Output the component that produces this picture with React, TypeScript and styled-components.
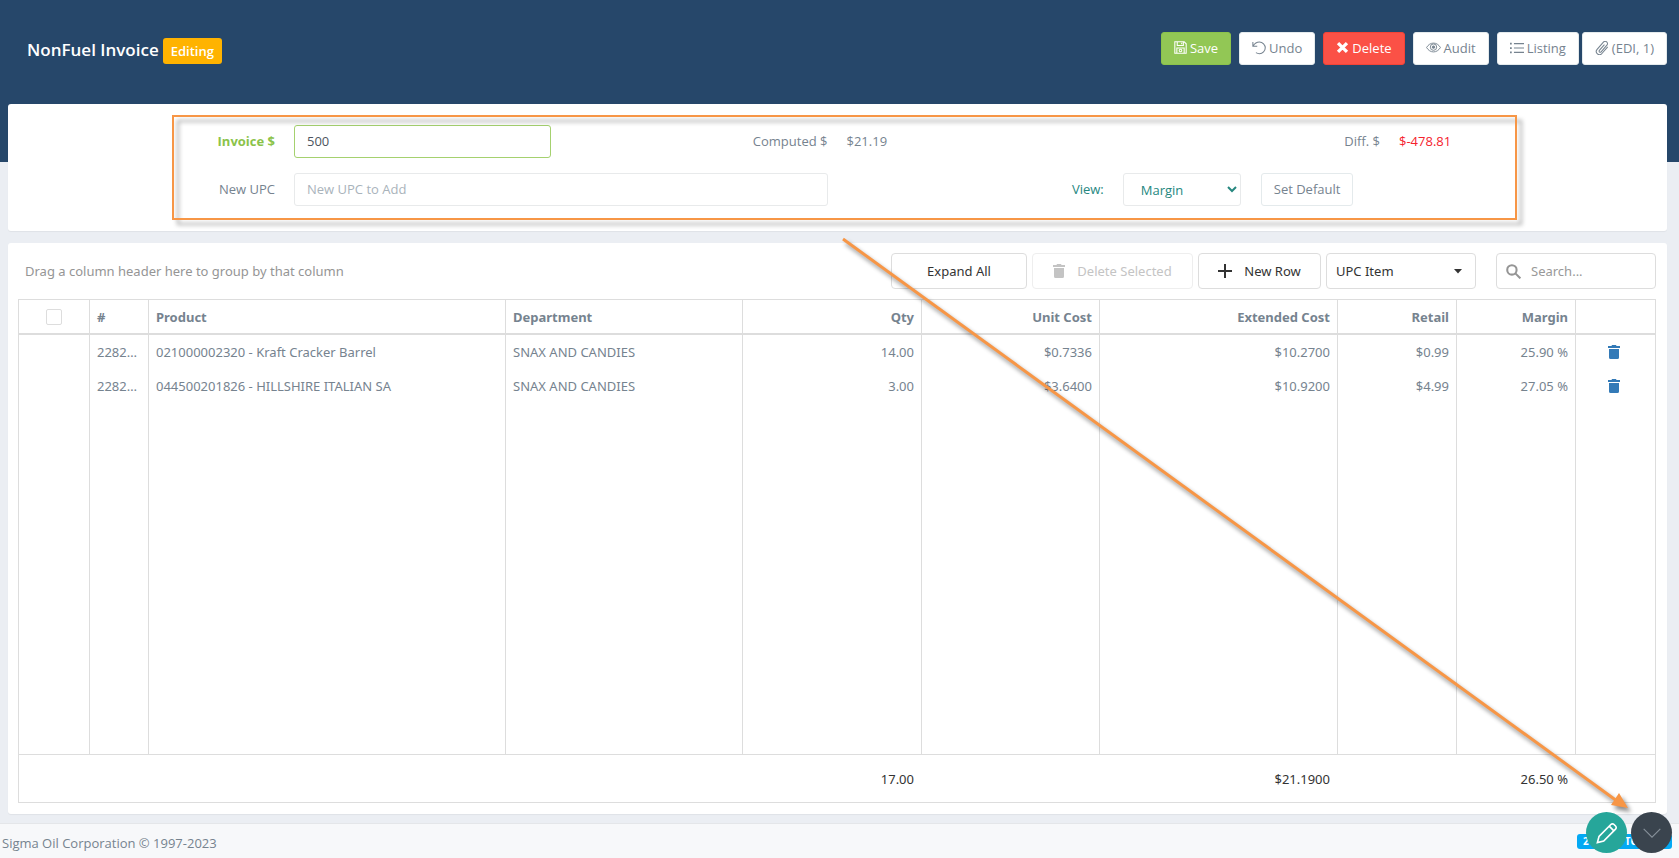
import React from "react";
import styled, { createGlobalStyle, css } from "styled-components";

const Global = createGlobalStyle`
  * { box-sizing: border-box; }
  body {
    margin: 0;
    background: #ebeef3;
    color: #76838f;
    font: 13px/20px "Open Sans", sans-serif;
  }
  button, input, select { font: inherit; color: inherit; margin: 0; }
`;

const Page = styled.div`
  position: relative;
  min-height: 100vh;
  min-width: 1280px;
  display: flex;
  flex-direction: column;
  background: linear-gradient(#26476a 162px, transparent 162px);
`;

const Header = styled.header`
  display: flex;
  justify-content: space-between;
  padding: 32px 12px 35px 27px;
`;

const TitleGroup = styled.div`
  display: flex;
  align-items: center;
  gap: 4px;
  height: 37px;
`;

const Title = styled.h1`
  margin: 0;
  padding-bottom: 2px;
  color: #fff;
  font-size: 17px;
  line-height: 24px;
  font-weight: 600;
`;

const StatusBadge = styled.span`
  padding: 3px 8px;
  border-radius: 3px;
  background: #ffb300;
  color: #fff;
  font-weight: 600;
`;

const Actions = styled.div`
  display: flex;
  gap: 8px;
`;

const ActionPair = styled.div`
  display: flex;
  gap: 3px;
`;

const tones = {
  plain: css`background: #fff; border-color: #e4eaec; color: #76838f;`,
  green: css`background: #92c755; border-color: #8bc34a; color: #fff;`,
  red: css`background: #fb5146; border-color: #f44336; color: #fff;`,
};

const Button = styled.button<{ $tone?: keyof typeof tones }>`
  display: inline-flex;
  align-items: center;
  justify-content: center;
  gap: 3px;
  height: 33px;
  padding: 0 12px 2px;
  border: 1px solid;
  border-radius: 3px;
  white-space: nowrap;
  ${(p) => tones[p.$tone ?? "plain"]}
`;

const Main = styled.main`
  display: flex;
  flex-direction: column;
  gap: 12px;
  padding: 0 12px 9px 8px;
`;

const Card = styled.section`
  background: #fff;
  border-radius: 3px;
  box-shadow: 0 1px 1px rgba(0, 0, 0, 0.05);
`;

const FormCard = styled(Card)`
  padding: 11px 150px 11px 164px;
`;

const Form = styled.form`
  position: relative;
  display: grid;
  grid-template-columns: 103px repeat(4, 1fr) 118px;
  column-gap: 19px;
  row-gap: 15px;
  padding: 10px 0 14px;
  align-items: center;
`;

const Highlight = styled.div`
  position: absolute;
  inset: 0;
  border: 2px solid #f79646;
  filter: drop-shadow(5px 5px 2px rgba(0, 0, 0, 0.35));
  pointer-events: none;
`;

const Label = styled.label<{ $accent?: "green" | "teal" }>`
  padding-bottom: 2px;
  text-align: right;
  color: ${(p) => (p.$accent === "green" ? "#8bc34a" : p.$accent === "teal" ? "#26877f" : "#76838f")};
  font-weight: ${(p) => (p.$accent === "green" ? 700 : 400)};
`;

const Value = styled.output<{ $negative?: boolean }>`
  padding-bottom: 2px;
  color: ${(p) => (p.$negative ? "#f5222d" : "#76838f")};
`;

const Field = styled.input<{ $wide?: boolean; $valid?: boolean }>`
  width: 100%;
  height: 33px;
  padding: 0 12px 2px;
  border: 1px solid ${(p) => (p.$valid ? "#a5d16f" : "#e8eaeb")};
  border-radius: 3px;
  background: #fff;
  color: #4d5560;
  outline: 0;
  grid-column: span ${(p) => (p.$wide ? 2 : 1)};
  &::placeholder { color: #a9b3bb; opacity: 1; }
`;

const ViewControls = styled.div`
  grid-column: span 2;
  display: flex;
  gap: 20px;
`;

const ViewSelect = styled.select`
  width: 118px;
  height: 33px;
  padding: 0 0 0 13px;
  border: 1px solid #e8eaeb;
  border-radius: 3px;
  background: #fff;
  color: #26877f;
`;

const GridCard = styled(Card)`
  padding: 10px 11px 11px 10px;
  font-family: "Noto Sans", sans-serif;
`;

const Toolbar = styled.div`
  display: flex;
  align-items: center;
  gap: 5px;
  margin-bottom: 10px;
`;

const GroupHint = styled.p`
  flex: 1;
  margin: 0;
  padding-left: 7px;
  color: #959595;
`;

const ToolButton = styled.button<{ $width: number }>`
  display: flex;
  align-items: center;
  justify-content: center;
  gap: 12px;
  width: ${(p) => p.$width}px;
  height: 36px;
  padding: 0;
  border: 1px solid #ddd;
  border-radius: 4px;
  background: #fff;
  color: #333;
  &:disabled { color: #c4c4c4; border-color: #eee; }
`;

const DropDown = styled.div`
  position: relative;
  width: 150px;
  svg { position: absolute; right: 14px; top: 16px; pointer-events: none; }
`;

const TypeSelect = styled.select`
  appearance: none;
  width: 100%;
  height: 36px;
  padding: 0 9px;
  border: 1px solid #ddd;
  border-radius: 4px;
  background: #fff;
  color: #333;
`;

const SearchBox = styled.label`
  display: flex;
  align-items: center;
  gap: 10px;
  width: 160px;
  height: 36px;
  margin-left: 15px;
  padding: 0 9px;
  border: 1px solid #ddd;
  border-radius: 4px;
  color: #959595;
  input {
    flex: 1;
    min-width: 0;
    padding: 0;
    border: 0;
    outline: 0;
    background: none;
  }
  input::placeholder { color: #999; opacity: 1; }
`;

const Table = styled.table`
  width: 100%;
  table-layout: fixed;
  border: 1px solid #ddd;
  border-collapse: separate;
  border-spacing: 0;
`;

const Cell = styled.td<{ $align?: "right" | "center" }>`
  height: 34px;
  padding: 0 7px;
  border-right: 1px solid #ddd;
  text-align: ${(p) => p.$align ?? "left"};
  overflow: hidden;
  text-overflow: ellipsis;
  white-space: nowrap;
  &:last-child { border-right: 0; }
`;

const HeadCell = styled(Cell)`
  height: 35px;
  border-bottom: 2px solid #ddd;
  font-weight: 700;
`;

const ActionCell = styled(Cell)`
  padding-right: 11px;
`;

const FillerCell = styled(Cell)`
  height: 351px;
`;

const TotalCell = styled(Cell)`
  height: 48px;
  padding-right: 8px;
  border-right: 0;
  border-top: 1px solid #ddd;
  color: #333;
`;

const CheckBox = styled.input`
  appearance: none;
  display: block;
  width: 16px;
  height: 16px;
  margin: 0 auto;
  border: 1px solid #ddd;
  border-radius: 2px;
  background: #fff;
`;

const IconButton = styled.button`
  display: flex;
  margin: 0 auto;
  padding: 0;
  border: 0;
  background: none;
  color: #337ab7;
`;

const Footer = styled.footer`
  flex: 1;
  display: flex;
  justify-content: space-between;
  align-items: flex-start;
  padding: 9px 7px 5px 2px;
  border-top: 1px solid #e4e6e9;
  background: #f7f8fa;
`;

const FooterBadge = styled.span`
  display: flex;
  gap: 36px;
  width: 95px;
  margin-top: 1px;
  padding: 0 6px;
  border-radius: 3px;
  background: #03a9f4;
  color: #fff;
  font-size: 10px;
  line-height: 15px;
  font-weight: 700;
`;

const FloatingButtons = styled.div`
  position: absolute;
  right: 7px;
  bottom: 5px;
  display: flex;
  gap: 4px;
`;

const RoundButton = styled.button<{ $dark?: boolean }>`
  display: flex;
  align-items: center;
  justify-content: center;
  width: 41px;
  height: 41px;
  padding: 0;
  border: 0;
  border-radius: 50%;
  background: ${(p) => (p.$dark ? "#3a444e" : "#26a69a")};
  color: ${(p) => (p.$dark ? "#86909a" : "#fff")};
`;

const Arrow = styled.svg`
  position: absolute;
  inset: 0;
  width: 100%;
  height: 100%;
  pointer-events: none;
  filter: drop-shadow(3px 4px 2px rgba(0, 0, 0, 0.45));
`;

const Line = ({ size = 13, sw = 1, children }: { size?: number; sw?: number; children: React.ReactNode }) => (
  <svg width={size} height={size} viewBox="0 0 16 16" fill="none" stroke="currentColor" strokeWidth={sw} aria-hidden="true">
    {children}
  </svg>
);

const SaveIcon = () => (
  <Line sw={1.3}>
    <path d="M1 1h11.500L15 3.500V15H1z M4 1v4.500h7.500V1 M9.500 2v2 M3.500 15V8.500h9V15" />
    <circle cx="8" cy="11.700" r="1.600" />
  </Line>
);
const UndoIcon = () => (
  <Line size={14} sw={1.2}>
    <path d="M1 1v5h5 M1.300 5.800C3 2.800 5.500 1.200 8.500 1.200a6.600 6.600 0 1 1 0 13.300c-1.500 0-2.800-.4-4-1.200" />
  </Line>
);
const CrossIcon = () => (
  <Line sw={4}>
    <path d="M2.500 2.500l11 11M13.500 2.500l-11 11" />
  </Line>
);
const EyeIcon = () => (
  <Line size={15} sw={1}>
    <path d="M.6 8C2.500 4.900 5 3.300 8 3.300S13.500 4.900 15.400 8C13.500 11.100 11 12.700 8 12.700S2.500 11.100.6 8z" />
    <circle cx="8" cy="7.600" r="3.400" />
    <circle cx="8" cy="7.600" r="1.300" fill="currentColor" />
  </Line>
);
const ListIcon = () => (
  <Line size={14} sw={1.2}>
    <path d="M4.500 3H16M4.500 8H16M4.500 13H16" />
    <path d="M0 3h2M0 8h2M0 13h2" strokeWidth="2" />
  </Line>
);
const ClipIcon = () => (
  <Line size={14} sw={1.2}>
    <path d="M10.800 4.200L5 10.800a1.300 1.300 0 0 0 2 1.700l6.600-7.700a2.600 2.600 0 0 0-4-3.500L2.400 9.600a3.600 3.600 0 0 0 5.500 4.700l6.600-7.600" />
  </Line>
);
const TrashIcon = () => (
  <svg width="12" height="14" viewBox="0 0 12 14" fill="currentColor" aria-hidden="true">
    <path d="M0 1h3.500L4 0h4l.5 1H12v2H0zM1 4h10v8.500a1.500 1.500 0 0 1-1.500 1.500h-7A1.500 1.500 0 0 1 1 12.500z" />
  </svg>
);
const PlusIcon = () => (
  <svg width="14" height="14" viewBox="0 0 14 14" stroke="currentColor" strokeWidth="2" aria-hidden="true">
    <path d="M7 0v14M0 7h14" />
  </svg>
);
const SearchIcon = () => (
  <Line size={15} sw={2.2}>
    <circle cx="6.300" cy="6.300" r="5" />
    <path d="M10 10l5.300 5.300" />
  </Line>
);
const PencilIcon = () => (
  <Line size={22} sw={1.2}>
    <path d="M1 15l1.200-4.600L10.800 1.800a1.600 1.600 0 0 1 2.300 0l1.100 1.100a1.600 1.600 0 0 1 0 2.300L5.600 13.800zM9.600 3l3.400 3.400" />
  </Line>
);
const ChevronIcon = () => (
  <Line size={18} sw={1}>
    <path d="M.6 4.300L8 11.700l7.400-7.400" />
  </Line>
);

type Align = "right" | "center" | undefined;
const columns: { name: string; width?: number; align?: Align }[] = [
  { name: "#", width: 59 },
  { name: "Product" },
  { name: "Department", width: 237 },
  { name: "Qty", width: 179, align: "right" },
  { name: "Unit Cost", width: 178, align: "right" },
  { name: "Extended Cost", width: 238, align: "right" },
  { name: "Retail", width: 119, align: "right" },
  { name: "Margin", width: 119, align: "right" },
];

const rows = [
  ["2282001", "021000002320 - Kraft Cracker Barrel", "SNAX AND CANDIES", "14.00", "$0.7336", "$10.2700", "$0.99", "25.90 %"],
  ["2282002", "044500201826 - HILLSHIRE ITALIAN SA", "SNAX AND CANDIES", "3.00", "$3.6400", "$10.9200", "$4.99", "27.05 %"],
];

const totals = ["", "", "", "17.00", "", "$21.1900", "", "26.50 %"];

export default function App() {
  return (
    <Page>
      <Global />
      <Header>
        <TitleGroup>
          <Title>NonFuel Invoice</Title>
          <StatusBadge>Editing</StatusBadge>
        </TitleGroup>
        <Actions>
          <Button $tone="green"><SaveIcon />Save</Button>
          <Button><UndoIcon />Undo</Button>
          <Button $tone="red"><CrossIcon />Delete</Button>
          <Button><EyeIcon />Audit</Button>
          <ActionPair>
            <Button><ListIcon />Listing</Button>
            <Button><ClipIcon />(EDI, 1)</Button>
          </ActionPair>
        </Actions>
      </Header>

      <Main>
        <FormCard>
          <Form onSubmit={(e) => e.preventDefault()}>
            <Label htmlFor="invoice" $accent="green">Invoice $</Label>
            <Field id="invoice" defaultValue="500" $valid />
            <Label htmlFor="computed">Computed $</Label>
            <Value id="computed">$21.19</Value>
            <Label htmlFor="diff">Diff. $</Label>
            <Value id="diff" $negative>$-478.81</Value>

            <Label htmlFor="upc">New UPC</Label>
            <Field id="upc" placeholder="New UPC to Add" $wide />
            <Label htmlFor="view" $accent="teal">View:</Label>
            <ViewControls>
              <ViewSelect id="view"><option>Margin</option></ViewSelect>
              <Button type="button">Set Default</Button>
            </ViewControls>
            <Highlight />
          </Form>
        </FormCard>

        <GridCard>
          <Toolbar>
            <GroupHint>Drag a column header here to group by that column</GroupHint>
            <ToolButton $width={136}>Expand All</ToolButton>
            <ToolButton $width={161} disabled><TrashIcon />Delete Selected</ToolButton>
            <ToolButton $width={123}><PlusIcon />New Row</ToolButton>
            <DropDown>
              <TypeSelect aria-label="Row type"><option>UPC Item</option></TypeSelect>
              <svg width="8" height="5" viewBox="0 0 8 5" fill="#333" aria-hidden="true"><path d="M0 0h8L4 4.500z" /></svg>
            </DropDown>
            <SearchBox>
              <SearchIcon />
              <input placeholder="Search..." aria-label="Search" />
            </SearchBox>
          </Toolbar>

          <Table>
            <colgroup>
              <col width={71} />
              {columns.map((c) => <col key={c.name} width={c.width} />)}
              <col width={79} />
            </colgroup>
            <thead>
              <tr>
                <HeadCell as="th"><CheckBox type="checkbox" aria-label="Select all" /></HeadCell>
                {columns.map((c) => <HeadCell as="th" key={c.name} $align={c.align}>{c.name}</HeadCell>)}
                <HeadCell as="th" />
              </tr>
            </thead>
            <tbody>
              {rows.map((row) => (
                <tr key={row[0]}>
                  <Cell />
                  {row.map((v, i) => <Cell key={i} $align={columns[i].align}>{v}</Cell>)}
                  <ActionCell><IconButton aria-label="Delete row"><TrashIcon /></IconButton></ActionCell>
                </tr>
              ))}
              <tr>
                <FillerCell />
                {columns.map((c) => <FillerCell key={c.name} />)}
                <FillerCell />
              </tr>
            </tbody>
            <tfoot>
              <tr>
                <TotalCell />
                {totals.map((v, i) => <TotalCell key={i} $align={columns[i].align}>{v}</TotalCell>)}
                <TotalCell />
              </tr>
            </tfoot>
          </Table>
        </GridCard>
      </Main>

      <Footer>
        <span>Sigma Oil Corporation © 1997-2023</span>
        <FooterBadge><span>2</span><span>TO</span></FooterBadge>
      </Footer>
      <FloatingButtons>
        <RoundButton aria-label="Edit"><PencilIcon /></RoundButton>
        <RoundButton $dark aria-label="Scroll down"><ChevronIcon /></RoundButton>
      </FloatingButtons>
      <Arrow viewBox="0 0 1679 858" preserveAspectRatio="none" aria-hidden="true">
        <path d="M843 239L1617 801" stroke="#f79646" strokeWidth="3" />
        <path d="M1619 793L1628 808L1611 805z" fill="#f79646" />
      </Arrow>
    </Page>
  );
}
